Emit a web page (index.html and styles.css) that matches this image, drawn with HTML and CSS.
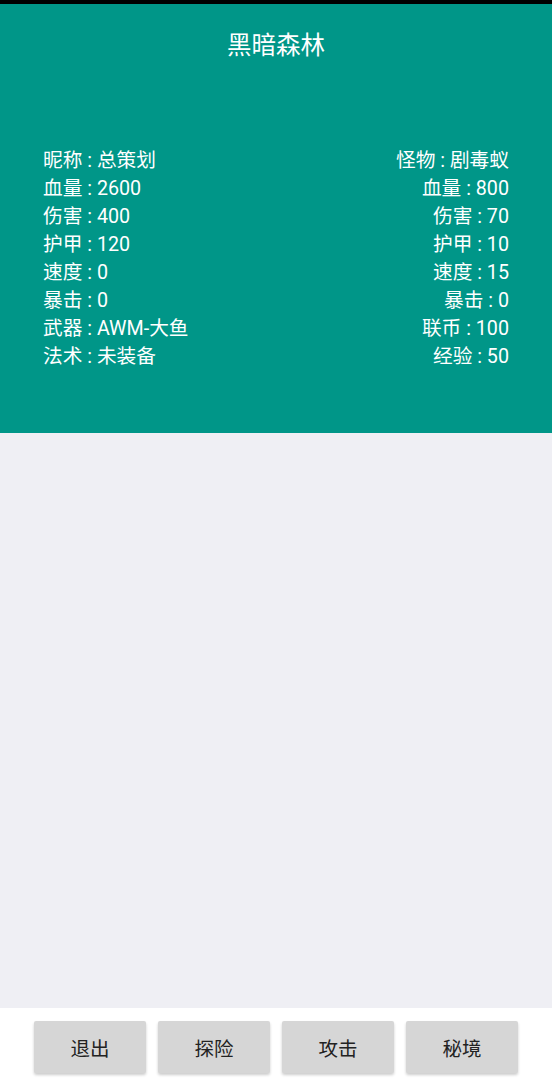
FILE: index.html
```html
<!DOCTYPE html>
<html lang="zh">
<head>
    <meta charset="UTF-8">
    <title>黑暗森林</title>
    <link rel="stylesheet" href="styles.css">
</head>
<body>
    <div class="app">
        <div class="status-bar"></div>

        <div class="battle-panel">
            <h1 class="scene-title">黑暗森林</h1>
            <div class="stats">
                <ul class="stat-list">
                    <li>昵称 : 总策划</li>
                    <li>血量 : 2600</li>
                    <li>伤害 : 400</li>
                    <li>护甲 : 120</li>
                    <li>速度 : 0</li>
                    <li>暴击 : 0</li>
                    <li>武器 : AWM-大鱼</li>
                    <li>法术 : 未装备</li>
                </ul>
                <ul class="stat-list right">
                    <li>怪物 : 剧毒蚁</li>
                    <li>血量 : 800</li>
                    <li>伤害 : 70</li>
                    <li>护甲 : 10</li>
                    <li>速度 : 15</li>
                    <li>暴击 : 0</li>
                    <li>联币 : 100</li>
                    <li>经验 : 50</li>
                </ul>
            </div>
        </div>

        <div class="log-area"></div>

        <div class="action-bar">
            <button class="action-btn">退出</button>
            <button class="action-btn">探险</button>
            <button class="action-btn">攻击</button>
            <button class="action-btn">秘境</button>
        </div>
    </div>
</body>
</html>
```

FILE: styles.css
```css
* {
    box-sizing: border-box;
}

body {
    margin: 0;
    font-family: Roboto, "Noto Sans CJK SC", sans-serif;
    background-color: #efeff4;
}

.app {
    display: flex;
    flex-direction: column;
    height: 1080px;
}

.status-bar {
    height: 4px;
    background-color: #000;
}

.battle-panel {
    height: 429px;
    padding: 27px 43px 0 43px;
    background-color: #009688;
    color: #fff;
}

.scene-title {
    margin: 0;
    font-size: 24.5px;
    font-weight: normal;
    line-height: 30px;
    text-align: center;
}

.stats {
    display: flex;
    justify-content: space-between;
    margin-top: 86px;
}

.stat-list {
    margin: 0;
    padding: 0;
    list-style: none;
    font-size: 19.7px;
    line-height: 28px;
}

.stat-list.right {
    text-align: right;
}

.log-area {
    flex: 1;
    background-color: #efeff4;
}

.action-bar {
    display: flex;
    justify-content: center;
    gap: 12px;
    height: 72px;
    padding-top: 13px;
    background-color: #fff;
}

.action-btn {
    width: 112px;
    height: 52px;
    border: none;
    border-radius: 2px;
    background-color: #d6d6d6;
    box-shadow: 0 2px 3px rgba(0, 0, 0, 0.2);
    font-family: Roboto, "Noto Sans CJK SC", sans-serif;
    font-size: 19.5px;
    color: #222;
}
```
